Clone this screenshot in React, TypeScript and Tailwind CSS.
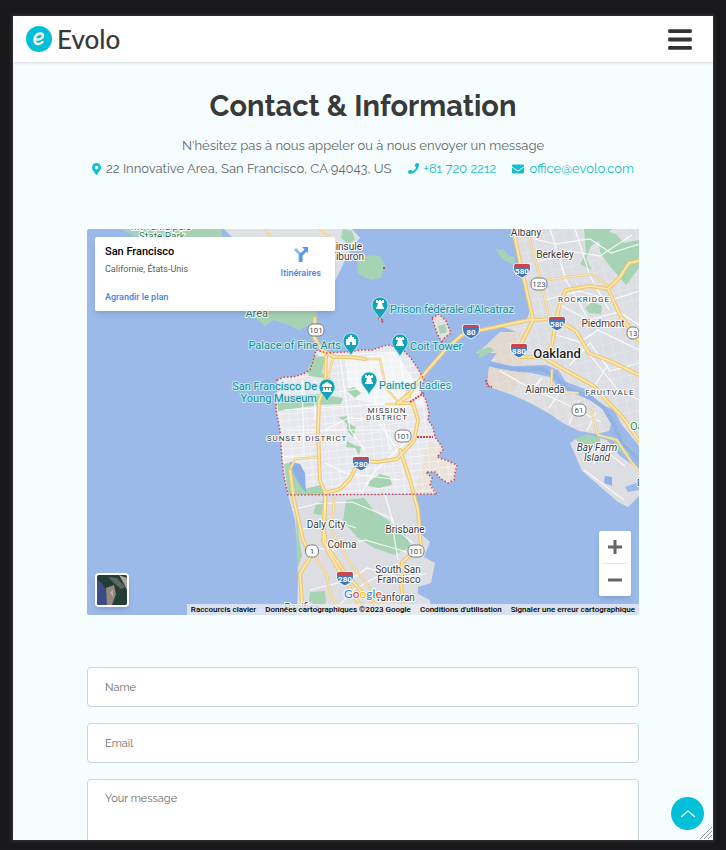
import { FaBars, FaEnvelope, FaMapMarkerAlt, FaPhone } from "react-icons/fa";
import type { ReactNode } from "react";

const CITY =
  "M277 380L285 377L293 377L303 374L310 370L313 361L316 350L327 353L347 352L360 350L372 350L387 345L400 347L410 357L417 367L424 380L420 390L426 400L429 413L428 420L433 427L435 437L441 445L443 450L437 457L448 461L457 465L455 473L454 480L448 483L441 479L435 472L426 472L432 478L430 484L433 490L437 494L288 495L284 477L282 460L280 430L276 410Z";
const SOUTH =
  "M288 495L416 495L418 510L420 533L430 542L424 557L435 563L433 573L431 583L418 587L418 594L430 600L431 615H297L298 577L297 543L295 520Z";
const EAST =
  "M512 229L516 246L520 263L525 287L530 310L527 319L500 326L517 332L506 345L497 344L484 347L476 353L497 353L491 361L512 366L546 365L558 370L566 382L588 390L597 402L614 410L622 425L639 446V229Z";
const ALAMEDA =
  "M489 366L503 371L531 373L550 377L556 385L574 393L591 401L605 410L612 421L609 431L597 434L579 431L563 423L550 414L530 403L510 394L487 386Z";
const AIRPORT =
  "M577 438L597 437L607 440L620 456L639 469V482L625 487L628 492L639 490V496L628 507L618 502L582 471L570 443Z";

const FREEWAYS = [
  "M513 229L521 266L530 306L533 319L505 325L477 331L462 335L447 348L425 373L410 393L398 403",
  "M530 320L556 319L576 331L589 353L610 361L639 375",
  "M556 320L561 300L566 290L590 286L608 289L620 277L629 263L639 261",
  "M533 320L518 350L520 357L543 357L565 370L594 386L607 401L625 420L639 441",
  "M608 289L620 315L639 341",
  "M556 321L552 345L542 357",
  "M398 403L413 403L418 420L414 441L397 459L378 462L359 461L350 479L340 489L325 493L324 530L327 550L346 582L366 615",
  "M397 403L409 396M400 450L410 480L418 510L421 547L402 562L401 583L404 615",
  "M315 318L314 337L322 350L334 357L350 357L365 359",
  "M326 356L325 386L319 401L318 430L320 481L326 494",
  "M290 470L294 500L303 540L311 556L300 574L303 615",
  "M326 494L323 541L343 570L365 596L389 615",
];

const ARTERIALS = [
  "M527 229L541 281L549 318",
  "M530 284L553 279L592 274L608 285",
  "M365 359L380 359L386 388L400 404",
  "M333 357L328 378",
  "M290 470L295 459L318 457",
  "M334 499L332 531L349 562L380 600L386 615",
  "M315 557L327 575L330 595L345 615",
  "M552 370L551 391L578 393",
  "M591 410L598 435L617 440L630 460L639 471",
  "M265 229L272 238M320 229L330 238",
  "M386 404H400L410 388",
];

const STREETS = [
  "M290 400L410 380M286 430H390M284 410L415 402M316 356L400 352M340 357L350 430L365 450M370 355L378 420L400 454M400 350L405 405",
  "M282 457H320M325 430L348 418L369 419L381 410L390 450M325 463L345 473L400 480M360 495L375 471L408 440M315 380V420M302 380L304 455",
  "M292 510L315 504L352 502L391 518L398 560M300 530L334 520L356 528M309 545L330 551L365 540L410 553",
  "M310 590L350 580L367 568L398 577L426 574M338 607L353 590L380 575M385 495L395 528L414 544",
  "M534 239L555 244L590 239L611 253L639 244M537 262L569 251L600 256L632 235M545 300L580 291L611 300L639 291",
  "M560 305L588 320L619 312L639 325M553 334L580 342L598 330L639 350M570 365L590 343L610 371L639 363",
  "M550 229L566 280L590 322M575 229L590 276L609 310M590 355L618 390L639 400M608 365L593 388L616 412",
  "M500 371L530 388L560 401L601 422M542 378L530 392M561 390L549 408M579 400L569 424M596 412L587 431",
  "M582 448L604 450L625 466M584 470L624 500M600 447L594 464",
];

const PARKS = [
  "M584 229H612L602 239L591 246L586 259L592 270L580 264L586 254Z",
  "M598 229L616 234L624 243L639 240V268L626 285L609 265L600 252Z",
  "M585 308L592 302L602 306L601 314L589 313Z",
  "M316 354L325 357L322 373L332 379L309 376L307 369Z",
  "M277 397L318 394L343 398L341 404L319 405L278 411Z",
  "M284 464L292 462L295 472L304 489L321 485L325 495H288Z",
  "M346 500L364 498L375 512L402 529L411 546L395 555L374 548L357 537L343 521Z",
  "M296 510L299 538L302 556L297 570Z",
  "M310 592L325 591L326 603L317 607L309 601Z",
  "M370 481L380 474L390 477L392 485L379 488L368 486Z",
  "M339 417L347 416L348 423L356 427L353 437L347 431L347 424Z",
  "M347 441L354 445L361 447L359 455L355 448L346 447Z",
  "M316 505L323 501L322 515L313 514Z",
  "M346 390L354 387L361 393L355 398Z",
  "M613 438L623 440L634 451L626 456L615 447Z",
  "M575 439L587 434L600 438L600 446L585 448Z",
  "M357 262L364 255L380 256L385 265L381 278L371 280L358 274Z",
  "M496 250L504 249L508 256L515 257L514 265L502 259Z",
  "M478 350L490 347L494 351L479 358Z",
  "M343 229L352 231L355 240L348 244L341 238Z",
  "M120 229H222V243H150Z",
  "M241 309H318L314 322L299 330L288 325L274 320L265 326L257 319Z",
];

function Label({ x, y, size = 10, fill = "#363a40", anchor = "middle", weight = 400, halo = "#ffffff", spacing, italic, children }: {
  x: number; y: number; size?: number; fill?: string; anchor?: "start" | "middle" | "end"; weight?: number; halo?: string; spacing?: number; italic?: boolean; children: ReactNode;
}) {
  return (
    <text x={x} y={y} fontSize={size} fill={fill} textAnchor={anchor} fontWeight={weight} stroke={halo} strokeWidth={2} strokeLinejoin="round" paintOrder="stroke" letterSpacing={spacing} fontStyle={italic ? "italic" : undefined}>
      {children}
    </text>
  );
}

function Interstate({ x, y, n }: { x: number; y: number; n: string }) {
  return (
    <g transform={`translate(${x} ${y})`}>
      <path d="M-8 -6H8C10 2 6 5 0 8C-6 5 -10 2 -8 -6Z" fill="#4279bd" stroke="#f7f9fc" />
      <path d="M-7 -6H7L8 -3H-8Z" fill="#d1434b" />
      <text y={4} fontSize={8} fontWeight={700} fill="#fff" textAnchor="middle">{n}</text>
    </g>
  );
}

function Route({ x, y, n, w = 16 }: { x: number; y: number; n: string; w?: number }) {
  return (
    <g transform={`translate(${x} ${y})`}>
      <rect x={-w / 2} y={-6} width={w} height={12} rx={5} fill="#fff" stroke="#777b80" />
      <text y={3} fontSize={8} fill="#4b4e53" textAnchor="middle">{n}</text>
    </g>
  );
}

function Pin({ x, y, kind = "tower" }: { x: number; y: number; kind?: "tower" | "museum" | "arts" }) {
  return (
    <g transform={`translate(${x} ${y})`}>
      <path d="M0 15C-2 9 -8 6 -8 0A8 8 0 1 1 8 0C8 6 2 9 0 15Z" fill="#14a4b5" stroke="#d8f4f6" strokeWidth={0.7} />
      {kind === "tower" && <path d="M-4 -5H-2V-4H-1V-5H1V-4H2V-5H4V-2H2L3 2H4V4H-4V2H-3L-2 -2H-4Z" fill="#fff" />}
      {kind === "museum" && <path d="M0 -5L5 -2V0H-5V-2ZM-4 1H-2V3H-1V1H1V3H2V1H4V4H5V5H-5V4H-4Z" fill="#fff" />}
      {kind === "arts" && <path d="M-1 -6H1V-4H3V-2H5V4H1V1H-1V4H-5V-2H-3V-4H-1Z" fill="#fff" />}
    </g>
  );
}

function MapDrawing() {
  const poi = "#168a9d";
  return (
    <svg className="block h-full w-full" viewBox="87 229 552 386" preserveAspectRatio="xMidYMid slice" role="img" aria-label="San Francisco" fontFamily="Roboto, sans-serif">
      <defs>
        <pattern id="cityGrid" width="9" height="7" patternUnits="userSpaceOnUse" patternTransform="rotate(-6)">
          <path d="M0 0H9M0 0V7" stroke="#fff" strokeWidth="1.3" />
        </pattern>
        <pattern id="bayGrid" width="10" height="12" patternUnits="userSpaceOnUse" patternTransform="rotate(-14)">
          <path d="M0 0H10M0 0V12" stroke="#f3f5f7" strokeWidth="1" />
        </pattern>
        <clipPath id="land"><path d={CITY + SOUTH + EAST + ALAMEDA + AIRPORT} /></clipPath>
      </defs>
      <rect x="87" y="229" width="552" height="386" fill="#9bbae9" />
      <path d="M224 229H352L360 238L352 247L344 262L338 275L330 290V309H240V245Z" fill="#dfe2e5" />
      <path d={SOUTH + EAST + AIRPORT} fill="#dcdfe3" />
      <path d={ALAMEDA} fill="#dfdfe0" />
      <path d={CITY} fill="#e7e8ed" />
      <path d="M500 332H522L513 355L530 365L512 366L491 361L497 353L484 347ZM489 367L530 374L514 388L510 394L487 386Z" fill="#e1d9cf" />
      <path d="M429 438L443 450L437 457L457 465L454 480L448 483L435 472L426 472L432 478L430 484L437 494H414L421 470Z" fill="#ebe2d9" />
      <path d={EAST} fill="url(#bayGrid)" opacity="0.5" />
      <path d={ALAMEDA} fill="url(#bayGrid)" opacity="0.5" />
      <path d={CITY} fill="url(#cityGrid)" opacity="0.6" />
      <path d="M345 360L396 352L420 390L424 405L392 408L350 398Z" fill="#fff" opacity="0.5" />
      {PARKS.map((d) => <path key={d} d={d} fill="#a6d3b3" />)}
      <path d="M290 462L300 464L305 473L306 493L300 485L293 473ZM605 476L612 477L612 486L604 483Z" fill="#8eb0e7" />
      <g clipPath="url(#land)" fill="none" stroke="#fff" strokeWidth="1.2" opacity="0.85">
        {STREETS.map((d) => <path key={d} d={d} />)}
      </g>
      <path d="M489 364L512 369L542 369L556 377L568 389L590 397L604 408L614 425L622 443L639 460" fill="none" stroke="#91b1e5" strokeWidth="4" />
      <g fill="none" strokeLinejoin="round" strokeLinecap="round">
        {ARTERIALS.map((d) => <path key={d} d={d} stroke="#efd08b" strokeWidth="2.5" />)}
        {ARTERIALS.map((d) => <path key={d} d={d} stroke="#fbe8bc" strokeWidth="1" />)}
        {FREEWAYS.map((d) => <path key={d} d={d} stroke="#efc873" strokeWidth="4" />)}
        {FREEWAYS.map((d) => <path key={d} d={d} stroke="#fde9b2" strokeWidth="1.6" />)}
      </g>
      <path d={CITY} fill="none" stroke="#dc444d" strokeWidth="1.5" strokeDasharray="1.5 2" />
      <path d="M432 318L439 314L446 321L451 333L443 339L442 343L437 333Z" fill="#e5e1df" stroke="#dc444d" strokeWidth="1.5" strokeDasharray="1.5 2" />
      <path d="M438 326L445 324L447 332L440 334Z" fill="#a6d3b3" />
      <path d="M378 318L383 320L382 323M384 267V270M486 380L488 386L492 387M410 402L424 393M417 437H433" fill="none" stroke="#dc444d" strokeWidth="2" strokeDasharray="2 1" />

      <Label x={161} y={230} fill="#34795a">Mt Tamalpais</Label>
      <Label x={162} y={240} fill="#34795a">State Park</Label>
      <Label x={268} y={317} size={11} fill="#34795a" anchor="end">Area</Label>
      <Label x={362} y={250} anchor="end">Péninsule</Label>
      <Label x={364} y={260} anchor="end">de Tiburon</Label>
      <Label x={526} y={236}>Albany</Label>
      <Label x={555} y={258}>Berkeley</Label>
      <Label x={584} y={302} size={8} spacing={1}>ROCKRIDGE</Label>
      <Label x={603} y={327}>Piedmont</Label>
      <Label x={557} y={358} size={13} weight={500} fill="#202124">Oakland</Label>
      <Label x={545} y={393}>Alameda</Label>
      <Label x={610} y={395} size={8} spacing={1}>FRUITVALE</Label>
      <Label x={597} y={451} italic>Bay Farm</Label>
      <Label x={597} y={461} italic>Island</Label>
      <Label x={630} y={430} anchor="start" size={11} fill="#259443">Oakland</Label>
      <Label x={637} y={486} anchor="start" size={9}>Doolittle</Label>
      <Label x={387} y={413} size={8} spacing={1}>MISSION</Label>
      <Label x={387} y={420} size={8} spacing={1}>DISTRICT</Label>
      <Label x={307} y={441} size={8} spacing={1}>SUNSET DISTRICT</Label>
      <Label x={326} y={528}>Daly City</Label>
      <Label x={342} y={548}>Colma</Label>
      <Label x={405} y={533}>Brisbane</Label>
      <Label x={398} y={573}>South San</Label>
      <Label x={399} y={583}>Francisco</Label>
      <Label x={395} y={601}>Tanforan</Label>
      <Label x={302} y={611}>Pacifica</Label>

      <Interstate x={522} y={270} n="580" />
      <Interstate x={557} y={323} n="580" />
      <Interstate x={471} y={331} n="80" />
      <Interstate x={519} y={350} n="880" />
      <Interstate x={361} y={463} n="280" />
      <Interstate x={345} y={578} n="280" />
      <Route x={539} y={284} n="123" />
      <Route x={579} y={410} n="61" w={14} />
      <Route x={633} y={333} n="13" w={12} />
      <Route x={316} y={330} n="101" />
      <Route x={403} y={436} n="101" />
      <Route x={416} y={551} n="101" />
      <Route x={312} y={551} n="1" w={13} />

      <Label x={390} y={313} size={11} fill={poi} halo="#c7eaf2" anchor="start">Prison fédérale d'Alcatraz</Label>
      <Label x={410} y={350} size={11} fill={poi} halo="#c7eaf2" anchor="start">Coit Tower</Label>
      <Label x={379} y={389} size={11} fill={poi} halo="#e3f6f9" anchor="start">Painted Ladies</Label>
      <Label x={341} y={349} size={11} fill={poi} halo="#c7eaf2" anchor="end">Palace of Fine Arts</Label>
      <Label x={317} y={390} size={11} fill={poi} halo="#c7eaf2" anchor="end">San Francisco De</Label>
      <Label x={317} y={402} size={11} fill={poi} halo="#c7eaf2" anchor="end">Young Museum</Label>
      <Pin x={380} y={305} />
      <Pin x={400} y={342} />
      <Pin x={369} y={380} />
      <Pin x={351} y={341} kind="arts" />
      <Pin x={327} y={387} kind="museum" />

      <text x="344" y="598" fontSize="12" fontFamily="Lato, sans-serif" fontWeight="500" stroke="#fff" strokeWidth="2" paintOrder="stroke">
        <tspan fill="#4285f4">G</tspan><tspan fill="#ea4335">o</tspan><tspan fill="#fbbc05">o</tspan><tspan fill="#4285f4">g</tspan><tspan fill="#34a853">l</tspan><tspan fill="#ea4335">e</tspan>
      </text>
    </svg>
  );
}

function ContactMap() {
  return (
    <section className="relative mt-[49px] h-[386px] overflow-hidden rounded-xs font-['Roboto',sans-serif]">
      <MapDrawing />
      <div className="absolute top-2 left-2 flex h-[74px] w-60 justify-between rounded-xs bg-white px-2.5 shadow-md">
        <div className="flex flex-col items-start">
          <h2 className="mt-2 text-[11px] leading-[14px] font-medium text-black">San Francisco</h2>
          <p className="mt-1 text-[9px] leading-3 text-[#5b5b5b]">Californie, États-Unis</p>
          <a href="#plan" className="mt-4 text-[9px] leading-3 font-medium text-[#427fed]">Agrandir le plan</a>
        </div>
        <a href="#itineraires" className="flex flex-col items-center pt-2 pr-1 text-[9px] leading-3 font-medium text-[#427fed]">
          <svg className="mb-1 h-[18px] w-[18px]" viewBox="0 0 18 18" fill="none" aria-hidden="true">
            <path d="M3 4L8 9V17" stroke="#8eb9f6" strokeWidth="3" />
            <path d="M9 17V10L14 5" stroke="#5896ed" strokeWidth="3" />
            <path d="M10 2H16V8Z" fill="#5896ed" />
          </svg>
          Itinéraires
        </a>
      </div>
      <button type="button" aria-label="Satellite" className="absolute bottom-2 left-2 h-[34px] w-[34px] overflow-hidden rounded-sm border-2 border-white shadow-md">
        <svg className="h-full w-full" viewBox="0 0 30 30" aria-hidden="true">
          <path d="M0 0H30V30H0Z" fill="#243d35" />
          <path d="M0 5L5 8L9 15L11 30H0Z" fill="#3d4d83" />
          <path d="M9 13L17 10L19 19L15 30H10Z" fill="#93897e" />
          <path d="M11 2L20 3L28 12L24 14L17 8Z" fill="#5c6862" />
          <path d="M22 0L30 3V15L26 7Z" fill="#a5a49d" />
          <path d="M13 17L16 15L16 22Z" fill="#c2ada0" />
        </svg>
      </button>
      <div className="absolute right-2 bottom-[19px] flex w-8 flex-col items-center rounded-xs bg-white text-[#666] shadow-md">
        <button type="button" aria-label="Zoom avant" className="flex h-8 w-8 items-center justify-center">
          <svg className="h-3.5 w-3.5" viewBox="0 0 14 14" aria-hidden="true"><path d="M0 7H14M7 0V14" stroke="currentColor" strokeWidth="3" /></svg>
        </button>
        <div className="h-px w-6 bg-[#e6e6e6]" />
        <button type="button" aria-label="Zoom arrière" className="flex h-8 w-8 items-center justify-center">
          <svg className="h-3.5 w-3.5" viewBox="0 0 14 14" aria-hidden="true"><path d="M0 7H14" stroke="currentColor" strokeWidth="3" /></svg>
        </button>
      </div>
      <div className="absolute right-0 bottom-0 flex h-[11px] items-center gap-[9px] bg-[#e8ecf1]/80 px-1 text-[8px] leading-[11px] font-medium whitespace-nowrap text-black">
        <button type="button">Raccourcis clavier</button>
        <span>Données cartographiques ©2023 Google</span>
        <a href="#conditions">Conditions d'utilisation</a>
        <a href="#erreur">Signaler une erreur cartographique</a>
      </div>
    </section>
  );
}

export default function App() {
  const field = "block w-full rounded border border-[#c4d8dc] bg-white px-[17px] text-[11px] text-[#555] placeholder:text-[#6b6b6b] placeholder:opacity-100";
  return (
    <div className="h-screen bg-[#19191b] px-[13px] pt-4 pb-2.5 font-['Raleway','Lato',sans-serif]">
      <div className="relative flex h-full flex-col overflow-hidden bg-[#f6fdfe] shadow-[0_0_4px_1px_#39393b]">
        <header className="relative flex h-[46px] shrink-0 items-center justify-between bg-white pr-[21px] pl-[13px] shadow-[0_1px_3px_rgba(0,0,0,0.15)]">
          <a href="#accueil" className="flex items-center gap-[5px] text-[#393939]">
            <svg className="h-[26px] w-[26px]" viewBox="0 0 26 26" aria-hidden="true">
              <circle cx="13" cy="13" r="13" fill="#00bfd8" />
              <path d="M9 13.5C13 14.2 17.5 12.3 17 9.3C16.5 6.7 12 6.8 9.8 10C7.8 13 7.9 17.5 11.5 18C14 18.3 15.3 17.3 16.6 16" fill="none" stroke="#fff" strokeWidth="2.4" strokeLinecap="round" />
            </svg>
            <span className="font-['Lato',sans-serif] text-[26px] leading-8 font-medium">Evolo</span>
          </a>
          <button type="button" aria-label="Menu" className="text-[#333]">
            <FaBars className="h-[27px] w-6" />
          </button>
        </header>
        <main className="mx-auto flex w-full max-w-[552px] flex-1 flex-col pt-6">
          <h1 className="text-center text-[29px] leading-10 font-bold text-[#393939]">Contact &amp; Information</h1>
          <div className="mt-2 flex flex-col items-center text-[13px] leading-[23px] text-[#62686c]">
            <p>N'hésitez pas à nous appeler ou à nous envoyer un message</p>
            <address className="flex flex-wrap justify-center gap-x-4 not-italic">
              <span className="flex items-center gap-[5px]"><FaMapMarkerAlt className="h-3 w-[9px] text-[#14bfcc]" />22 Innovative Area, San Francisco, CA 94043, US</span>
              <a href="tel:+817202212" className="flex items-center gap-[5px] text-[#14bfcc]"><FaPhone className="h-[11px] w-[11px]" />+81 720 2212</a>
              <a href="mailto:office@evolo.com" className="flex items-center gap-[5px] text-[#14bfcc]"><FaEnvelope className="h-3 w-3" />office@evolo.com</a>
            </address>
          </div>
          <ContactMap />
          <form className="mt-[52px] flex flex-col gap-4">
            <input aria-label="Name" placeholder="Name" className={`${field} h-10`} />
            <input type="email" aria-label="Email" placeholder="Email" className={`${field} h-10`} />
            <textarea aria-label="Your message" placeholder="Your message" className={`${field} h-32 resize-none py-[11px] leading-4`} />
          </form>
        </main>
        <a href="#haut" aria-label="Haut de page" className="absolute right-[9px] bottom-[10px] flex h-[33px] w-[33px] items-center justify-center rounded-full bg-[#00bfd8]">
          <svg className="h-2 w-4" viewBox="0 0 16 8" fill="none" aria-hidden="true"><path d="M1 7L8 1L15 7" stroke="#e9feff" strokeWidth="1.3" /></svg>
        </a>
        <svg className="absolute right-0 bottom-0 h-3.5 w-3.5" viewBox="0 0 14 14" aria-hidden="true"><path d="M1 13L13 1M5 13L13 5M9 13L13 9" stroke="#8b9193" strokeWidth="1" /></svg>
      </div>
    </div>
  );
}
